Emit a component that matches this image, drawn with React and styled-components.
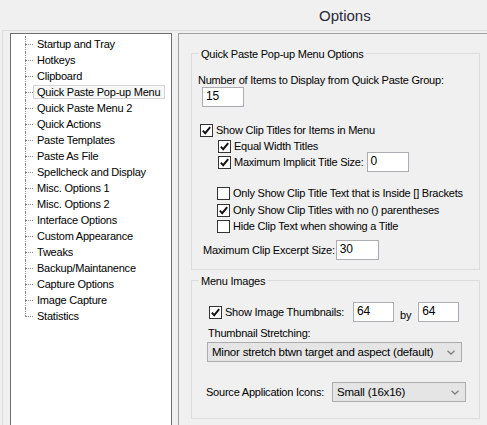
import React from 'react';
import styled, { createGlobalStyle } from 'styled-components';

const GlobalStyle = createGlobalStyle`
  html, body {
    margin: 0;
    padding: 0;
    background: #f0f0f0;
    overflow: hidden;
  }
  body {
    font-family: "Liberation Sans", Arial, sans-serif;
    font-size: 11px;
    letter-spacing: -0.22px;
    color: #000;
  }
`;

const treeItems = [
  'Startup and Tray',
  'Hotkeys',
  'Clipboard',
  'Quick Paste Pop-up Menu',
  'Quick Paste Menu 2',
  'Quick Actions',
  'Paste Templates',
  'Paste As File',
  'Spellcheck and Display',
  'Misc. Options 1',
  'Misc. Options 2',
  'Interface Options',
  'Custom Appearance',
  'Tweaks',
  'Backup/Maintanence',
  'Capture Options',
  'Image Capture',
  'Statistics',
];

function CheckBox({ checked }) {
  return (
    <Box>
      {checked && (
        <svg width="11" height="11" viewBox="0 0 11 11">
          <path d="M1.8 5.6 L4.2 8.2 L9.2 2.2" fill="none" stroke="#111" strokeWidth="1.9" />
        </svg>
      )}
    </Box>
  );
}

function Chevron() {
  return (
    <svg width="8" height="5" viewBox="0 0 8 5">
      <path d="M0.5 0.8 L4 4 L7.5 0.8" fill="none" stroke="#808080" strokeWidth="1.3" />
    </svg>
  );
}

function App() {
  return (
    <Window>
      <GlobalStyle />
      <Header>
        <Title>Options</Title>
      </Header>
      <Body>
        <Tree>
          <TreeList>
            {treeItems.map((item, i) => (
              <TreeRow key={item} last={i === treeItems.length - 1}>
                <TreeLabel selected={item === 'Quick Paste Pop-up Menu'}>{item}</TreeLabel>
              </TreeRow>
            ))}
          </TreeList>
        </Tree>

        <Panel>
          <Group>
            <Legend>Quick Paste Pop-up Menu Options</Legend>
            <Label top={11} left={6}>Number of Items to Display from Quick Paste Group:</Label>
            <Input top={0} left={10} width={42}>15</Input>

            <Row top={15} left={8}>
              <CheckBox checked />
              <span>Show Clip Titles for Items in Menu</span>
            </Row>
            <Row top={0} left={26}>
              <CheckBox checked />
              <span>Equal Width Titles</span>
            </Row>
            <Row top={-2} left={26} tall>
              <CheckBox checked />
              <span>Maximum Implicit Title Size:</span>
              <Input top={0} left={0} width={42}>0</Input>
            </Row>

            <Row top={13} left={25}>
              <CheckBox />
              <span>Only Show Clip Title Text that is Inside [] Brackets</span>
            </Row>
            <Row top={1} left={25}>
              <CheckBox checked />
              <span>Only Show Clip Titles with no () parentheses</span>
            </Row>
            <Row top={0} left={25}>
              <CheckBox />
              <span>Hide Clip Text when showing a Title</span>
            </Row>

            <Row top={6} left={11} tall>
              <span>Maximum Clip Excerpt Size:</span>
              <Input top={0} left={-2} width={43}>30</Input>
            </Row>
          </Group>

          <Group bottom={16} spaced>
            <Legend>Menu Images</Legend>
            <Row top={13} left={17} tall>
              <CheckBox checked />
              <span>Show Image Thumbnails:</span>
              <Input top={0} left={6} width={41}>64</Input>
              <By>by</By>
              <Input top={0} left={4} width={41}>64</Input>
            </Row>
            <Label top={4} left={16}>Thumbnail Stretching:</Label>
            <Select top={2} left={15} width={255}>
              <span>Minor stretch btwn target and aspect (default)</span>
              <Chevron />
            </Select>
            <Row top={20} left={14} tall>
              <span>Source Application Icons:</span>
              <Select top={0} left={5} width={134}>
                <span>Small (16x16)</span>
                <Chevron />
              </Select>
            </Row>
          </Group>
        </Panel>
      </Body>
    </Window>
  );
}

export default App;

const Window = styled.div`
  width: 487px;
  height: 425px;
  overflow: hidden;
  background: #f0f0f0;
`;

const Header = styled.div`
  height: 30px;
  display: flex;
  align-items: center;
  padding-left: 317px;
  border-bottom: 1px solid #dcdcdc;
  margin-left: 2px;
`;

const Title = styled.div`
  font-size: 15px;
  letter-spacing: 0;
  color: #2a2a3a;
  margin-top: 1px;
`;

const Body = styled.div`
  display: flex;
  gap: 6px;
  margin-left: 2px;
  padding: 2px 0 0 7px;
  border-left: 1px solid #dcdcdc;
  height: 400px;
`;

const Tree = styled.div`
  width: 160px;
  flex: none;
  height: 410px;
  background: #fff;
  border: 1px solid #6e6e6e;
`;

const TreeList = styled.div`
  display: flex;
  flex-direction: column;
  padding: 2px 0 0 14px;
`;

const TreeRow = styled.div`
  position: relative;
  height: 16px;
  display: flex;
  align-items: center;
  padding-left: 8px;

  &::before {
    content: '';
    position: absolute;
    left: 0;
    top: 8px;
    width: 8px;
    border-top: 1px dotted #8a8a8a;
  }

  &::after {
    content: '';
    position: absolute;
    left: 0;
    top: 0;
    height: ${p => (p.last ? '8px' : '16px')};
    border-left: 1px dotted #8a8a8a;
  }
`;

const TreeLabel = styled.span`
  height: 12px;
  line-height: 12px;
  padding: 0 4px 0 3px;
  border: 1px solid ${p => (p.selected ? '#d4d4d4' : 'transparent')};
  background: ${p => (p.selected ? '#f7f7f7' : 'transparent')};
  white-space: nowrap;
  color: #000;
`;

const Panel = styled.div`
  flex: 1;
  height: 410px;
  border-top: 1px solid #a0a0a0;
  border-left: 1px solid #a0a0a0;
  padding: 19px 0 0 12px;
  display: flex;
  flex-direction: column;
`;

const Group = styled.div`
  width: 287px;
  border: 1px solid #dcdcdc;
  display: flex;
  flex-direction: column;
  align-items: flex-start;
  padding-bottom: ${p => p.bottom ?? 9}px;
  margin-top: ${p => (p.spaced ? 10 : 0)}px;
`;

const Legend = styled.span`
  margin: -7px 0 0 7px;
  padding: 0 2px;
  height: 15px;
  line-height: 15px;
  background: #f0f0f0;
  color: #000;
`;

const Label = styled.div`
  margin-top: ${p => p.top}px;
  margin-left: ${p => p.left}px;
  height: 14px;
  line-height: 14px;
  white-space: nowrap;
`;

const Row = styled.div`
  display: flex;
  align-items: center;
  gap: 3px;
  height: ${p => (p.tall ? 20 : 16)}px;
  margin-top: ${p => p.top}px;
  margin-left: ${p => p.left}px;
  white-space: nowrap;
`;

const Box = styled.span`
  width: 11px;
  height: 11px;
  flex: none;
  border: 1px solid #333;
  background: #fff;
  display: flex;
  align-items: center;
  justify-content: center;
`;

const Input = styled.div`
  box-sizing: border-box;
  width: ${p => p.width}px;
  height: 20px;
  flex: none;
  margin-top: ${p => p.top}px;
  margin-left: ${p => p.left}px;
  padding: 0 3px;
  background: #fff;
  border: 1px solid #abadb3;
  line-height: 17px;
  font-size: 12px;
`;

const By = styled.span`
  align-self: flex-end;
  margin-left: 3px;
  line-height: 14px;
`;

const Select = styled.div`
  box-sizing: border-box;
  width: ${p => p.width}px;
  height: 20px;
  flex: none;
  margin-top: ${p => p.top}px;
  margin-left: ${p => p.left}px;
  padding: 0 6px 0 4px;
  background: #e5e5e5;
  border: 1px solid #acacac;
  display: flex;
  align-items: center;
  justify-content: space-between;
  font-size: 11.5px;
`;
